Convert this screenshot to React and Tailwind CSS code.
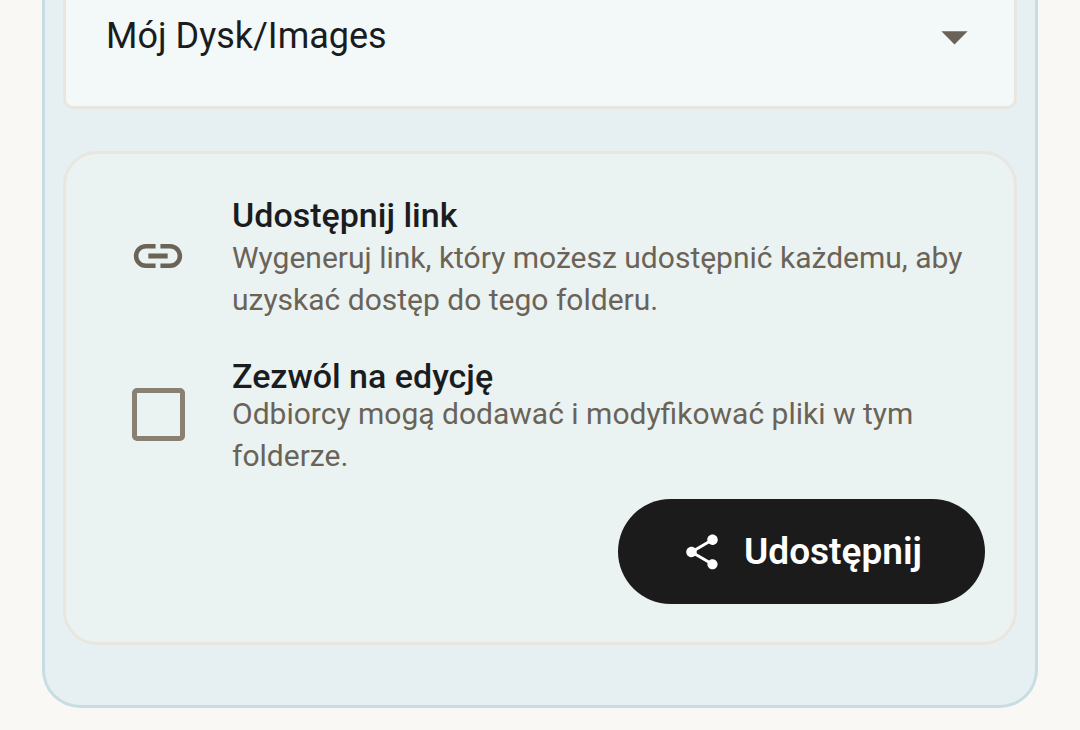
import { useState } from "react";
import { MdArrowDropDown, MdLink, MdShare } from "react-icons/md";

const folders = ["Mój Dysk/Images", "Mój Dysk/Dokumenty", "Mój Dysk"];

function FolderSelect({ value, onChange }) {
  return (
    <div className="relative">
      <select
        aria-label="Folder"
        value={value}
        onChange={(e) => onChange(e.target.value)}
        className="block w-full h-[109px] appearance-none rounded-b-[10px] border-3 border-t-0 border-[#e8e6df] bg-[#f3f9f9] pl-10 pr-24 pb-[34px] text-[36px] text-[#1a1c1e]"
      >
        {folders.map((folder) => (
          <option key={folder} value={folder}>
            {folder}
          </option>
        ))}
      </select>
      <MdArrowDropDown
        size={63}
        className="pointer-events-none absolute right-[31px] top-[5px] text-[#6b6358]"
      />
    </div>
  );
}

export default function App() {
  const [folder, setFolder] = useState(folders[0]);
  const [canEdit, setCanEdit] = useState(false);

  return (
    <div className="min-h-screen bg-[#faf8f5] px-[42px] pb-[22px] font-['Roboto',sans-serif]">
      <main className="rounded-b-[38px] border-3 border-t-0 border-[#c7dde1] bg-[#e6eff2] px-[18px] pb-[60px]">
        <FolderSelect value={folder} onChange={setFolder} />

        <section className="mt-[42px] rounded-[34px] border-3 border-[#e8e6df] bg-[#eaf3f2] px-[29px] pt-[44px] pb-[38px]">
          <div className="flex items-start gap-[45px] pl-[34px]">
            <MdLink size={58} className="mt-[29px] shrink-0 text-[#6b6358]" />
            <div className="flex-1">
              <h2 className="text-[34px] leading-[34px] font-medium text-[#1a1c1e]">
                Udostępnij link
              </h2>
              <p className="mt-[5px] text-[30px] leading-[42px] text-[#6b6358]">
                Wygeneruj link, który możesz udostępnić każdemu, aby uzyskać
                dostęp do tego folderu.
              </p>
            </div>
          </div>

          <div className="mt-[38px] flex items-start gap-[45px] pl-[34px]">
            <div className="mt-[29px] flex w-[58px] shrink-0 justify-center">
              <input
                id="can-edit"
                type="checkbox"
                aria-describedby="can-edit-info"
                checked={canEdit}
                onChange={(e) => setCanEdit(e.target.checked)}
                className="size-[53px] appearance-none rounded-[5px] border-5 border-[#878073] checked:bg-[#878073]"
              />
            </div>
            <div className="flex-1">
              <label
                htmlFor="can-edit"
                className="block text-[34px] leading-[34px] font-medium text-[#1a1c1e]"
              >
                Zezwól na edycję
              </label>
              <p
                id="can-edit-info"
                className="text-[30px] leading-[42px] text-[#6b6358]"
              >
                Odbiorcy mogą dodawać i modyfikować pliki w tym folderze.
              </p>
            </div>
          </div>

          <div className="mt-[22px] flex justify-end">
            <button
              type="button"
              className="flex h-[105px] items-center gap-[21px] rounded-full bg-[#1b1b1b] px-[63px] text-[37px] font-semibold text-white"
            >
              <MdShare size={42} />
              Udostępnij
            </button>
          </div>
        </section>
      </main>
    </div>
  );
}
